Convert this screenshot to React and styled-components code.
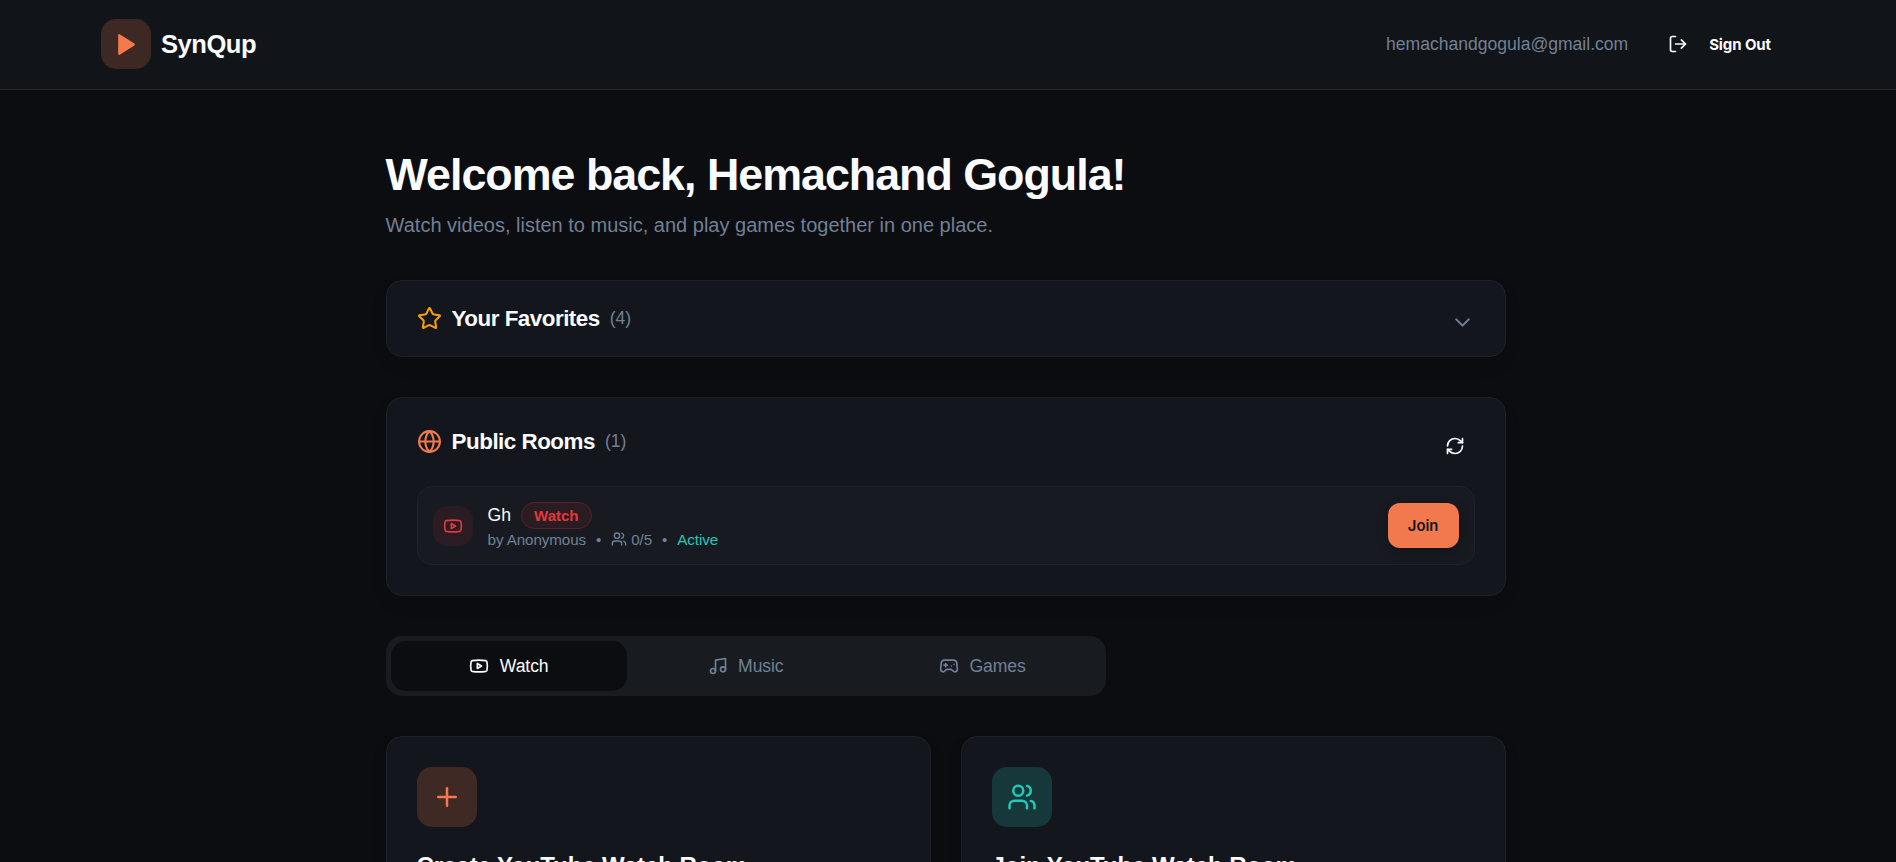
import React from 'react'
import styled, { createGlobalStyle, css } from 'styled-components'
import {
    ChevronDown,
    Gamepad2,
    Globe,
    LogOut,
    Music,
    Plus,
    RefreshCw,
    Star,
    Users,
    Youtube
} from 'lucide-react'

const tabs = [
    { label: 'Watch', icon: Youtube, active: true },
    { label: 'Music', icon: Music },
    { label: 'Games', icon: Gamepad2 }
]

const actions = [
    { title: 'Create YouTube Watch Room', icon: Plus, color: '#f4794d', bg: '#3e2925' },
    { title: 'Join YouTube Watch Room', icon: Users, color: '#21c9b7', bg: '#17383b' }
]

const App = () => {
    return <Page>
        <GlobalStyle />
        <Header>
            <Brand>
                <Logo>
                    <svg width="25" height="25" viewBox="0 0 24 24" fill="currentColor" stroke="currentColor" strokeWidth="2" strokeLinejoin="round">
                        <polygon points="5 3 19 12 5 21 5 3" />
                    </svg>
                </Logo>
                <BrandName>SynQup</BrandName>
            </Brand>
            <Account>
                <Email>hemachandgogula@gmail.com</Email>
                <SignOut>
                    <LogOut size={20} />
                    <span>Sign Out</span>
                </SignOut>
            </Account>
        </Header>
        <Main>
            <Title>Welcome back, Hemachand Gogula!</Title>
            <Subtitle>Watch videos, listen to music, and play games together in one place.</Subtitle>

            <Favorites>
                <SectionHead>
                    <SectionTitle color="#f59e0b">
                        <Star size={25} />
                        <h2>Your Favorites</h2>
                        <Count>(4)</Count>
                    </SectionTitle>
                    <Toggle>
                        <ChevronDown size={25} />
                    </Toggle>
                </SectionHead>
            </Favorites>

            <Rooms>
                <SectionHead>
                    <SectionTitle color="#f4794d">
                        <Globe size={25} />
                        <h2>Public Rooms</h2>
                        <Count>(1)</Count>
                    </SectionTitle>
                    <Refresh>
                        <RefreshCw size={20} />
                    </Refresh>
                </SectionHead>
                <Room>
                    <RoomIcon>
                        <Youtube size={20} />
                    </RoomIcon>
                    <RoomInfo>
                        <RoomName>
                            Gh
                            <Badge>Watch</Badge>
                        </RoomName>
                        <RoomMeta>
                            <span>by Anonymous</span>
                            <span>•</span>
                            <Members>
                                <Users size={16} />
                                0/5
                            </Members>
                            <span>•</span>
                            <Status>Active</Status>
                        </RoomMeta>
                    </RoomInfo>
                    <Join>Join</Join>
                </Room>
            </Rooms>

            <Tabs>
                {tabs.map(({ label, icon: Icon, active }) => (
                    <Tab key={label} $active={active}>
                        <Icon size={20} />
                        <span>{label}</span>
                    </Tab>
                ))}
            </Tabs>

            <Actions>
                {actions.map(({ title, icon: Icon, color, bg }) => (
                    <Action key={title}>
                        <ActionIcon $color={color} $bg={bg}>
                            <Icon size={30} />
                        </ActionIcon>
                        <ActionTitle>{title}</ActionTitle>
                    </Action>
                ))}
            </Actions>
        </Main>
    </Page>
}

const GlobalStyle = createGlobalStyle`
    * {
        box-sizing: border-box;
    }

    body {
        margin: 0;
        overflow: hidden;
        background: #0c0d10;
        color: #fafbfd;
        font-family: "Liberation Sans", Arial, sans-serif;
    }

    h1, h2, h3, p {
        margin: 0;
    }

    button {
        border: none;
        background: none;
        color: inherit;
        font-family: inherit;
    }

    svg {
        display: block;
        flex-shrink: 0;
    }
`

const Page = styled.div`
    height: 862px;
    overflow: hidden;
`

const Header = styled.header`
    display: flex;
    justify-content: space-between;
    align-items: flex-start;
    height: 90px;
    padding: 19px 105px 0 101px;
    background: #111418;
    border-bottom: 1px solid #22272d;
`

const Brand = styled.div`
    display: flex;
    align-items: center;
    gap: 10px;
`

const Logo = styled.div`
    display: flex;
    justify-content: center;
    align-items: center;
    width: 50px;
    height: 50px;
    border-radius: 15px;
    background: #3d2823;
    color: #f4794d;
`

const BrandName = styled.div`
    font-size: 25.6px;
    font-weight: 700;
    letter-spacing: -0.02em;
`

const Account = styled.div`
    display: flex;
    align-items: center;
    gap: 20px;
    height: 50px;
`

const Email = styled.span`
    font-size: 17.6px;
    letter-spacing: -0.03px;
    color: #718096;
`

const SignOut = styled.button`
    display: flex;
    align-items: center;
    gap: 21px;
    padding: 0 20px;
    font-family: Inter, sans-serif;
    font-size: 15px;
    font-weight: 700;
    letter-spacing: -0.1px;
`

const Main = styled.main`
    width: 1120px;
    margin: 0 0 0 385.6px;
    padding-top: 57px;
`

const Title = styled.h1`
    font-size: 44.8px;
    line-height: 54px;
    font-weight: 700;
    letter-spacing: -1px;
    white-space: nowrap;
`

const Subtitle = styled.p`
    margin-top: 9px;
    font-size: 20px;
    line-height: 30px;
    color: #718096;
`

const card = css`
    padding: 30px;
    border: 1px solid #1d2026;
    border-radius: 16px;
    background: #13161d;
    box-shadow: 0 8px 20px -4px rgba(0, 0, 0, 0.12);
`

const Favorites = styled.section`
    ${card}
    height: 77px;
    margin-top: 40px;
    padding-top: 24px;
`

const Rooms = styled.section`
    ${card}
    height: 199px;
    margin-top: 40px;
`

const SectionHead = styled.div`
    display: flex;
    justify-content: space-between;
    align-items: flex-start;
`

const SectionTitle = styled.div`
    display: flex;
    align-items: center;
    gap: 10px;
    height: 27px;

    svg {
        color: ${p => p.color};
    }

    h2 {
        font-size: 22.4px;
        font-weight: 700;
        letter-spacing: -0.5px;
    }
`

const Count = styled.span`
    font-size: 17.6px;
    color: #718096;
`

const Toggle = styled.div`
    margin-top: 5px;
    color: #718096;
`

const Refresh = styled.button`
    margin-top: 8px;
    padding: 0 10px;
`

const Room = styled.div`
    display: flex;
    align-items: center;
    gap: 15px;
    height: 79px;
    margin-top: 30px;
    padding: 0 15px;
    border: 1px solid #1f2228;
    border-radius: 15px;
    background: #171a20;
`

const RoomIcon = styled.div`
    display: flex;
    justify-content: center;
    align-items: center;
    width: 40px;
    height: 40px;
    border-radius: 14px;
    background: #2a1c22;
    color: #e03a3a;
`

const RoomInfo = styled.div`
    flex: 1;
    height: 47px;
`

const RoomName = styled.div`
    display: flex;
    align-items: center;
    gap: 10px;
    height: 27px;
    font-size: 17.6px;
`

const Badge = styled.span`
    padding: 0 12px;
    border: 1px solid #552328;
    border-radius: 14px;
    background: #2a1c22;
    color: #e03a3a;
    font-size: 15px;
    line-height: 25px;
    font-weight: 700;
`

const RoomMeta = styled.div`
    display: flex;
    align-items: center;
    gap: 10px;
    height: 20px;
    font-size: 15.2px;
    letter-spacing: -0.1px;
    color: #718096;
`

const Members = styled.span`
    display: flex;
    align-items: center;
    gap: 4px;
`

const Status = styled.span`
    color: #21c9b7;
`

const Join = styled.button`
    width: 71px;
    height: 45px;
    padding: 0;
    border-radius: 12px;
    background: #f2794e;
    box-shadow: 0 4px 12px rgba(0, 0, 0, 0.25);
    color: #111418;
    font-family: Inter, sans-serif;
    font-size: 14.8px;
    font-weight: 600;
`

const Tabs = styled.div`
    display: grid;
    grid-template-columns: repeat(3, 1fr);
    width: 720px;
    height: 60px;
    margin-top: 40px;
    padding: 5px;
    border-radius: 16px;
    background: #181b1f;
`

const Tab = styled.button`
    display: flex;
    justify-content: center;
    align-items: center;
    gap: 10.5px;
    padding: 0;
    border-radius: 15px;
    background: ${p => p.$active ? '#0c0d10' : 'transparent'};
    color: ${p => p.$active ? '#fafbfd' : '#718096'};
    font-size: 17.6px;
    letter-spacing: -0.1px;
`

const Actions = styled.div`
    display: grid;
    grid-template-columns: 1fr 1fr;
    gap: 30px;
    margin-top: 40px;
`

const Action = styled.div`
    ${card}
    height: 300px;
`

const ActionIcon = styled.div`
    display: flex;
    justify-content: center;
    align-items: center;
    width: 60px;
    height: 60px;
    border-radius: 15px;
    background: ${p => p.$bg};
    color: ${p => p.$color};
`

const ActionTitle = styled.h3`
    margin-top: 24px;
    font-size: 24px;
    line-height: 30px;
    font-weight: 700;
    letter-spacing: -0.08px;
`

export default App
